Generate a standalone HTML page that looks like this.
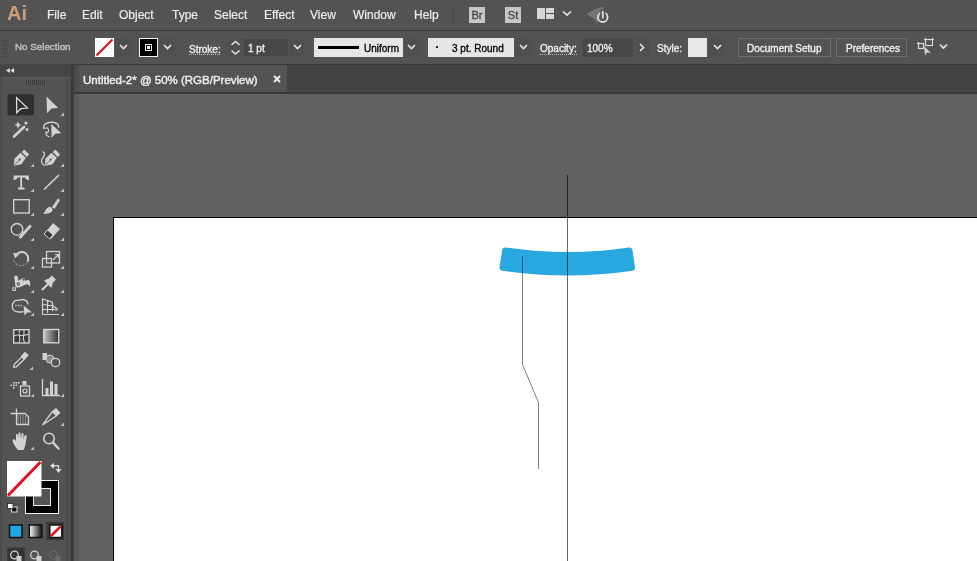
<!DOCTYPE html>
<html><head><meta charset="utf-8">
<style>
*{margin:0;padding:0;box-sizing:border-box}
html,body{width:977px;height:561px;overflow:hidden;background:#535353;font-family:"Liberation Sans",sans-serif}
.abs{position:absolute}
div{will-change:transform}
#menubar{left:0;top:0;width:977px;height:30px;background:#535353}
#mline{left:0;top:30px;width:977px;height:1px;background:#383838}
#ctrl{left:0;top:31px;width:977px;height:33px;background:#535353}
#cline{left:0;top:64px;width:977px;height:1px;background:#393939}
.mi{position:absolute;top:8px;font-size:12px;color:#ececec;line-height:14px;-webkit-text-stroke:0.2px currentColor}
.ct{position:absolute;font-size:10px;color:#eeeeee;line-height:12px;margin-top:1px;-webkit-text-stroke:0.35px currentColor}
.box{position:absolute;background:#474747}
.chev{position:absolute}
#tabbar{left:74px;top:65px;width:903px;height:28px;background:#434343}
#tab{left:79px;top:65px;width:208px;height:28px;background:#535353}
#tabline{left:74px;top:92px;width:903px;height:2px;background:#393939}
#canvas{left:79px;top:94px;width:898px;height:467px;background:#616161}
#strip{left:74px;top:94px;width:5px;height:467px;background:#595959}
#vsep{left:71px;top:64px;width:3px;height:497px;background:#3c3c3c}
#tools{left:0;top:64px;width:71px;height:497px;background:#535353}
#toolhead{left:0;top:64px;width:71px;height:13px;background:#474747}
#artboard{left:113px;top:217px;width:864px;height:344px;background:#fff;border-left:1px solid #000;border-top:1px solid #000}
</style></head><body>
<div id="menubar" class="abs"></div>
<div id="mline" class="abs"></div>
<div class="abs" style="left:0;top:26px;width:977px;height:1px;background:#585858"></div>
<div id="ctrl" class="abs"></div>
<div id="cline" class="abs"></div>

<!-- menu -->
<div class="abs" style="left:7px;top:2px;color:#cc9f7e;font-size:20px;font-weight:bold;line-height:22px;letter-spacing:0px">Ai</div>
<div class="mi" style="left:47px">File</div>
<div class="mi" style="left:82px">Edit</div>
<div class="mi" style="left:119px">Object</div>
<div class="mi" style="left:172px">Type</div>
<div class="mi" style="left:214px">Select</div>
<div class="mi" style="left:264px">Effect</div>
<div class="mi" style="left:310px">View</div>
<div class="mi" style="left:353px">Window</div>
<div class="mi" style="left:414px">Help</div>
<div class="abs" style="left:453px;top:5px;width:1px;height:20px;background:#474747"></div>
<div class="abs" style="left:469px;top:7px;width:16px;height:16px;background:#c6c6c6;color:#444;font-size:11px;line-height:17px;text-align:center;-webkit-text-stroke:0.3px #444">Br</div>
<div class="abs" style="left:505px;top:7px;width:16px;height:16px;background:#c6c6c6;color:#444;font-size:11px;line-height:17px;text-align:center;-webkit-text-stroke:0.3px #444">St</div>
<div class="abs" style="left:537px;top:8px;width:8px;height:11px;background:#d6d6d6"></div>
<div class="abs" style="left:546px;top:8px;width:8px;height:5px;background:#d6d6d6"></div>
<div class="abs" style="left:546px;top:14px;width:8px;height:5px;background:#d6d6d6"></div>
<svg class="abs" style="left:562px;top:10px" width="10" height="7"><path d="M1 1.5L5 5.2L9 1.5" stroke="#e8e8e8" stroke-width="1.6" fill="none"/></svg>
<svg class="abs" style="left:582px;top:0px" width="28" height="28">
<path d="M4.5 14 C8 12 12 9 15 8.5 C17 8 19 7 21.5 6.5 L21 12 C19 14 17 17 16 23 C14.5 22.5 13 21 12 18.5 C9 17 6.5 15.5 4.5 14Z" fill="#808080" opacity="0.75"/>
<circle cx="20.8" cy="17.2" r="4.8" stroke="#e0e0e0" stroke-width="1.8" fill="none"/>
<rect x="18.3" y="10" width="5" height="6.5" fill="#535353"/>
<line x1="20.8" y1="11" x2="20.8" y2="18.5" stroke="#e0e0e0" stroke-width="1.8"/>
</svg>



<!-- control bar -->
<div class="abs" style="left:1px;top:40px;width:7px;height:17px;background:repeating-linear-gradient(#484848 0 1px,transparent 1px 2px)"></div>
<div class="ct" style="left:15px;top:40px;font-size:9.8px;color:#c4c4c4">No Selection</div>
<div class="abs" style="left:95px;top:38px;width:19px;height:19px;background:#fff"></div>
<svg class="abs" style="left:95px;top:38px" width="19" height="19"><line x1="1.5" y1="17.5" x2="17.5" y2="1.5" stroke="#d3121c" stroke-width="2.2"/></svg>
<div class="box" style="left:116px;top:38px;width:15px;height:19px;background:#4f4f4f"></div>
<svg class="abs" style="left:119px;top:44px" width="9" height="6"><path d="M1 1L4.5 4.5L8 1" stroke="#e8e8e8" stroke-width="1.6" fill="none"/></svg>
<div class="abs" style="left:139px;top:38px;width:19px;height:19px;background:#000;border:1px solid #f0f0f0"></div>
<div class="abs" style="left:145px;top:44px;width:7px;height:7px;border:1px solid #f0f0f0"></div>
<div class="abs" style="left:147px;top:46px;width:3px;height:3px;background:#f0f0f0"></div>
<div class="box" style="left:160px;top:38px;width:16px;height:19px;background:#4f4f4f"></div>
<svg class="abs" style="left:163px;top:44px" width="9" height="6"><path d="M1 1L4.5 4.5L8 1" stroke="#e8e8e8" stroke-width="1.6" fill="none"/></svg>
<div class="ct" style="left:189px;top:43px">Stroke:</div>
<div class="abs" style="left:189px;top:54px;width:32px;height:1px;background:repeating-linear-gradient(90deg,#bdbdbd 0 1px,transparent 1px 2px)"></div>
<div class="box" style="left:228px;top:39px;width:15px;height:17px;background:#4f4f4f"></div>
<svg class="abs" style="left:230px;top:40px" width="11" height="16"><path d="M1.5 5L5.5 1.5L9.5 5M1.5 10.5L5.5 14L9.5 10.5" stroke="#e8e8e8" stroke-width="1.4" fill="none"/></svg>
<div class="box" style="left:244px;top:39px;width:44px;height:17px;background:#474747"></div>
<div class="ct" style="left:248px;top:42px">1 pt</div>
<div class="box" style="left:289px;top:39px;width:15px;height:17px;background:#4f4f4f"></div>
<svg class="abs" style="left:293px;top:44px" width="9" height="6"><path d="M1 1L4.5 4.5L8 1" stroke="#e8e8e8" stroke-width="1.6" fill="none"/></svg>

<div class="abs" style="left:314px;top:38px;width:89px;height:19px;background:#e6e6e6"></div>
<div class="abs" style="left:318px;top:46px;width:41px;height:3px;background:#000"></div>
<div class="ct" style="left:364px;top:42px;color:#080808">Uniform</div>
<div class="box" style="left:404px;top:38px;width:15px;height:19px;background:#4f4f4f"></div>
<svg class="abs" style="left:407px;top:44px" width="9" height="6"><path d="M1 1L4.5 4.5L8 1" stroke="#e8e8e8" stroke-width="1.6" fill="none"/></svg>

<div class="abs" style="left:428px;top:38px;width:86px;height:19px;background:#e6e6e6"></div>
<div class="abs" style="left:436px;top:46px;width:2px;height:2px;background:#222"></div>
<div class="ct" style="left:452px;top:42px;color:#080808">3 pt. Round</div>
<div class="box" style="left:516px;top:38px;width:15px;height:19px;background:#4f4f4f"></div>
<svg class="abs" style="left:519px;top:44px" width="9" height="6"><path d="M1 1L4.5 4.5L8 1" stroke="#e8e8e8" stroke-width="1.6" fill="none"/></svg>

<div class="ct" style="left:540px;top:42px">Opacity:</div>
<div class="abs" style="left:540px;top:54px;width:37px;height:1px;background:repeating-linear-gradient(90deg,#bdbdbd 0 1px,transparent 1px 2px)"></div>
<div class="box" style="left:583px;top:38px;width:50px;height:19px;background:#474747"></div>
<div class="ct" style="left:587px;top:42px">100%</div>
<div class="box" style="left:636px;top:38px;width:14px;height:19px;background:#4f4f4f"></div>
<svg class="abs" style="left:639px;top:43px" width="6" height="9"><path d="M1 1L4.5 4.5L1 8" stroke="#e8e8e8" stroke-width="1.6" fill="none"/></svg>

<div class="ct" style="left:657px;top:42px">Style:</div>
<div class="abs" style="left:688px;top:38px;width:19px;height:19px;background:#e8e8e8"></div>
<div class="box" style="left:709px;top:38px;width:16px;height:19px;background:#4f4f4f"></div>
<svg class="abs" style="left:713px;top:44px" width="9" height="6"><path d="M1 1L4.5 4.5L8 1" stroke="#e8e8e8" stroke-width="1.6" fill="none"/></svg>

<div class="abs" style="left:738px;top:38px;width:93px;height:19px;border:1px solid #6e6e6e;background:#535353"></div>
<div class="ct" style="left:747px;top:42px">Document Setup</div>
<div class="abs" style="left:836px;top:38px;width:71px;height:19px;border:1px solid #6e6e6e;background:#535353"></div>
<div class="ct" style="left:846px;top:42px">Preferences</div>


<svg class="abs" style="left:914px;top:36px" width="36" height="22">
<g stroke="#d8d8d8" stroke-width="1.2" fill="none">
<rect x="4.5" y="7.5" width="5" height="5"/>
<rect x="11.5" y="3.5" width="7" height="6"/>
<path d="M3 7.5h1.5M4.5 6v1.5M10 3.5h1.5M11.5 2v1.5M18.5 2v1.5M18.5 3.5h1.5"/>
</g>
<path d="M10 10 L11 19.5 L13 16.5 L17 17 Z" fill="#cfcfcf"/>
<path d="M26 8.5L29.5 12L33 8.5" stroke="#e8e8e8" stroke-width="1.6" fill="none"/>
</svg>

<div id="tabbar" class="abs"></div>
<div id="tab" class="abs"></div>
<div class="abs" style="left:74px;top:65px;width:5px;height:28px;background:#4b4b4b"></div>
<div id="tabline" class="abs"></div>
<div class="abs" style="left:287px;top:90px;width:690px;height:1px;background:#4a4a4a"></div>
<div id="strip" class="abs"></div>
<div id="canvas" class="abs"></div>
<div id="artboard" class="abs"></div>
<svg class="abs" style="left:0;top:0" width="977" height="561">
<path d="M505.16 250.46 A428 428 0 0 0 629.44 250.46 L632.10 267.76 A445.5 445.5 0 0 1 502.50 267.76 Z" fill="#29a7df" stroke="#29a7df" stroke-width="6" stroke-linejoin="round"/>
<path d="M522.5 256V364.5L538.5 402.5V469" stroke="#000" stroke-opacity="0.5" stroke-width="1" fill="none"/>
<line x1="567.5" y1="175" x2="567.5" y2="561" stroke="#000" stroke-opacity="0.6" stroke-width="1"/>
</svg>
<div id="tools" class="abs"></div>
<div id="toolhead" class="abs"></div>
<!--TB--><svg class="abs" style="left:0;top:0" width="72" height="561"><rect x="0" y="77" width="71" height="484" fill="#535353"/><rect x="0" y="64" width="71" height="13" fill="#454545"/><rect x="0" y="77" width="71" height="1" fill="#5c5c5c"/><rect x="0.5" y="64" width="1" height="497" fill="#474747"/><rect x="65" y="78" width="6" height="483" fill="#4f4f4f"/><path d="M6 70.5L9.8 68V73ZM10.3 70.5L14.1 68V73Z" fill="#e0e0e0"/><rect x="26" y="80" width="1" height="5" fill="#3c3c3c"/><rect x="28" y="80" width="1" height="5" fill="#3c3c3c"/><rect x="30" y="80" width="1" height="5" fill="#3c3c3c"/><rect x="32" y="80" width="1" height="5" fill="#3c3c3c"/><rect x="34" y="80" width="1" height="5" fill="#3c3c3c"/><rect x="36" y="80" width="1" height="5" fill="#3c3c3c"/><rect x="38" y="80" width="1" height="5" fill="#3c3c3c"/><rect x="40" y="80" width="1" height="5" fill="#3c3c3c"/><rect x="42" y="80" width="1" height="5" fill="#3c3c3c"/><rect x="44" y="80" width="1" height="5" fill="#3c3c3c"/><rect x="7.5" y="94.3" width="26.5" height="21" rx="1.5" fill="#2f2f2f"/><path d="M16.6 97.6L27.4 108.1L20.9 108.7L16.7 112.8Z" stroke="#dadada" stroke-width="1.3" fill="none" stroke-linejoin="miter"/><path d="M46.5 96.5L58.2 108L51.5 108.6L47 113.2Z" fill="#d2d2d2"/><path d="M60.5 116H64V112.5Z" fill="#c0c0c0"/><line x1="14" y1="136.5" x2="24" y2="127" stroke="#d2d2d2" stroke-width="2.6" stroke-linecap="round"/><path d="M18 121.3L19.1 123.9L21.7 125L19.1 126.1L18 128.7L16.9 126.1L14.3 125L16.9 123.9Z" fill="#d2d2d2"/><circle cx="26" cy="123" r="1.6" fill="#d2d2d2"/><circle cx="27" cy="129.5" r="1.5" fill="#d2d2d2"/><path d="M44 129 C42.5 124.5 46.5 122.3 51 122.3 C55.5 122.3 59 123.5 58.8 127.5" stroke="#d2d2d2" stroke-width="1.4" fill="none"/><path d="M45 128.5 C47 127 49 128.5 48.5 131 C48 133 46 133 45.5 131.5 M46 132.5 C45.5 134.5 47 136 49.5 137" stroke="#d2d2d2" stroke-width="1.2" fill="none"/><path d="M51.3 124L61.3 133.3L55.3 133.8L51.5 138Z" fill="#d2d2d2"/><g transform="translate(0 0)"><path d="M13.6 165.8L14.6 158.5L20.5 152.8L25.8 157.8L21.5 164.2Z" fill="#d2d2d2"/><path d="M21.8 152L24.3 149.6L29.2 154.6L26.7 157Z" fill="#d2d2d2"/><circle cx="19.6" cy="159.6" r="1.1" fill="#535353"/><line x1="14.2" y1="165.2" x2="19.2" y2="160" stroke="#535353" stroke-width="0.8"/></g><path d="M30.5 167H34V163.5Z" fill="#c0c0c0"/><g transform="translate(31 0)"><path d="M13.6 165.8L14.6 158.5L20.5 152.8L25.8 157.8L21.5 164.2Z" fill="#d2d2d2"/><path d="M21.8 152L24.3 149.6L29.2 154.6L26.7 157Z" fill="#d2d2d2"/><circle cx="19.6" cy="159.6" r="1.1" fill="#535353"/><line x1="14.2" y1="165.2" x2="19.2" y2="160" stroke="#535353" stroke-width="0.8"/></g><path d="M44.5 165.8 C40.5 163 41 160 43 157.5 C45 155 45 151.5 42.5 151.8" stroke="#d2d2d2" stroke-width="1.3" fill="none"/><path d="M60.5 167H64V163.5Z" fill="#c0c0c0"/><path d="M14.5 180V176.5H28V180M16.2 176.5V179M26.3 176.5V179M21.2 176.5V188.5M18 188.5H24.5" stroke="#d2d2d2" stroke-width="1.8" fill="none"/><path d="M30.5 192H34V188.5Z" fill="#c0c0c0"/><line x1="44.5" y1="189" x2="58.5" y2="175.5" stroke="#d2d2d2" stroke-width="1.7" stroke-linecap="round"/><path d="M60.5 192H64V188.5Z" fill="#c0c0c0"/><rect x="13.7" y="199.7" width="15.5" height="13.3" stroke="#d2d2d2" stroke-width="1.4" fill="none"/><path d="M30.5 216H34V212.5Z" fill="#c0c0c0"/><path d="M52 207 L58 198.5 L60 200 L54.5 209Z" fill="#d2d2d2"/><path d="M43 214 C45 213 45 209 48 207.5 C51 206 53 208.5 52.5 210.5 C51.5 213 47 214 43 214Z" fill="#d2d2d2"/><path d="M60.5 216H64V212.5Z" fill="#c0c0c0"/><circle cx="17" cy="229.3" r="5.8" stroke="#d2d2d2" stroke-width="1.3" fill="none"/><path d="M18.5 237 L29.8 224.5 L31.8 226.5 L20.5 239 Z" fill="#d2d2d2"/><path d="M30.5 241H34V237.5Z" fill="#c0c0c0"/><path d="M44 234 L53 223 L60 229 L51 239 Z" fill="#d2d2d2"/><path d="M44 234 L47.5 230 L53 235 L49.5 238.8Z" fill="#3a3a3a" stroke="#d2d2d2" stroke-width="1"/><path d="M60.5 241H64V237.5Z" fill="#c0c0c0"/><path d="M16.5 254.5 C19 251.5 24 251 26.5 254 C28.5 256.5 28.5 259.5 27.5 262" stroke="#d2d2d2" stroke-width="1.9" fill="none"/><path d="M27 263 C25 266 20 266.5 16.5 264.5 C14.5 263 13.5 261 13.5 259" stroke="#9a9a9a" stroke-width="1.2" fill="none" stroke-dasharray="2 1.5"/><path d="M13.2 252.5 L19 254.5 L15 258.5 Z" fill="#d2d2d2"/><path d="M30.5 269H34V265.5Z" fill="#c0c0c0"/><rect x="46.5" y="251.5" width="13" height="11.5" stroke="#d2d2d2" stroke-width="1.3" fill="none"/><rect x="42.5" y="258.5" width="9" height="8.5" stroke="#d2d2d2" stroke-width="1.3" fill="none"/><path d="M53 260L58 255M55 254.5h3.5v3.5" stroke="#d2d2d2" stroke-width="1.2" fill="none"/><path d="M60.5 269H64V265.5Z" fill="#c0c0c0"/><path d="M14.2 277 C14.5 275 17 275 17.8 277 L18.5 281 C20 279.5 23 277.5 24 278 C25 278.8 25 280.5 25.5 281 C27 279.5 29.5 279.5 30 282 C30.5 284 30.3 286 29.5 286.5 C28.5 285 27.5 284 26 284.5 C23 285.5 21 287 18 287.5 C15.5 287.8 15 286 15.2 284 Z" fill="#d2d2d2"/><circle cx="18.3" cy="284" r="1.7" fill="#535353"/><circle cx="18.3" cy="284" r="0.8" fill="#d2d2d2"/><circle cx="23.5" cy="279.6" r="1.1" fill="#535353"/><rect x="12.8" y="287.8" width="2.6" height="2.6" stroke="#d2d2d2" stroke-width="1" fill="#535353"/><path d="M30.5 293H34V289.5Z" fill="#c0c0c0"/><path d="M44 280.5 L49 278.5 L51.8 275.5 L56 279.8 L53 282.5 L51.3 288 Z" fill="#d2d2d2"/><path d="M42.5 289.5 L47.5 284.5" stroke="#d2d2d2" stroke-width="2" stroke-linecap="round"/><path d="M60.5 293H64V289.5Z" fill="#c0c0c0"/><path d="M23.5 311.5 C19 312.5 13 312.5 12.3 307 C11.8 302 15.5 299.5 19.5 300.3 C23 298.5 28 300 28 304.5" stroke="#d2d2d2" stroke-width="1.3" fill="none"/><path d="M15.3 305.5h1.3M17.8 305.5h1.3M20.3 305.5h1.3" stroke="#d2d2d2" stroke-width="1.3"/><path d="M23.5 305.5L31.8 312.2L27.3 312.5L24.5 315.5Z" fill="#d2d2d2"/><path d="M30.5 316H34V312.5Z" fill="#c0c0c0"/><path d="M42.5 298.8V314.5H59M42.5 298.8L52.5 302.3V311M42.5 304.5L52.5 305.5M42.5 309.5L52.5 309.5M47.5 300.5V313M52.5 305.5L58 309.5M52.5 309L57 310.5" stroke="#d2d2d2" stroke-width="1.2" fill="none"/><path d="M60.5 316H64V312.5Z" fill="#c0c0c0"/><rect x="13.7" y="329.7" width="15.3" height="13.3" stroke="#d2d2d2" stroke-width="1.4" fill="#3a3a3a"/><path d="M14 336 C18 333 21 338 28.5 334M20 330 C17 334 22 338 19 342.5M24 330 C25 335 21 338 25 343" stroke="#d2d2d2" stroke-width="1.1" fill="none"/><defs><linearGradient id="g1" x1="0" x2="1"><stop offset="0" stop-color="#c4c4c4"/><stop offset="1" stop-color="#333"/></linearGradient><linearGradient id="g2" x1="0" x2="1"><stop offset="0" stop-color="#ffffff"/><stop offset="1" stop-color="#111"/></linearGradient></defs><rect x="43.7" y="329.5" width="15" height="13.3" stroke="#d2d2d2" stroke-width="1.4" fill="url(#g1)"/><path d="M13.6 367.3 L14.2 364.5 L21.8 356.8 L24.2 359.2 L16.5 366.8 Z" stroke="#d2d2d2" stroke-width="1.3" fill="none"/><path d="M20.8 356.2 L25 351.8 L28.8 355.3 L24.6 359.8Z" fill="#d2d2d2"/><path d="M29.5 370H33V366.5Z" fill="#c0c0c0"/><rect x="42.5" y="353" width="4.5" height="7" fill="#d2d2d2"/><circle cx="50" cy="359" r="4" fill="#8a8a8a" stroke="#d2d2d2" stroke-width="1"/><circle cx="55.5" cy="362.5" r="4.2" fill="#535353" stroke="#d2d2d2" stroke-width="1.3"/><rect x="13" y="382" width="1.6" height="1.6" fill="#d2d2d2"/><rect x="15.5" y="382" width="1.6" height="1.6" fill="#d2d2d2"/><rect x="18" y="382" width="1.6" height="1.6" fill="#d2d2d2"/><rect x="13" y="384.5" width="1.6" height="1.6" fill="#d2d2d2"/><rect x="15.5" y="384.5" width="1.6" height="1.6" fill="#d2d2d2"/><rect x="13" y="387" width="1.6" height="1.6" fill="#d2d2d2"/><rect x="10.5" y="384.5" width="1.6" height="1.6" fill="#d2d2d2"/><rect x="20.5" y="386" width="9" height="10" stroke="#d2d2d2" stroke-width="1.3" fill="none"/><circle cx="25" cy="391" r="2" stroke="#d2d2d2" stroke-width="1.2" fill="none"/><rect x="22.5" y="381" width="4" height="4" fill="#d2d2d2"/><path d="M30.5 397H34V393.5Z" fill="#c0c0c0"/><path d="M42.5 379V395.5H60" stroke="#d2d2d2" stroke-width="1.3" fill="none"/><rect x="45.5" y="388" width="3" height="7" fill="#d2d2d2"/><rect x="50" y="381.5" width="3" height="13.5" fill="#d2d2d2"/><rect x="54.5" y="384" width="3" height="11" fill="#d2d2d2"/><path d="M60.5 397H64V393.5Z" fill="#c0c0c0"/><path d="M18 414.5v10M20.5 414.5v10M23 414.5v10M25.5 416v8.5" stroke="#8c8c8c" stroke-width="1"/><path d="M16.5 408.5V424.5H28.5V417L25 413.5H16.5M10.5 413.5H16.5" stroke="#d2d2d2" stroke-width="1.3" fill="none"/><path d="M42.5 425 L52 412 L56 409 L59.5 413 L56 416 Z" stroke="#d2d2d2" stroke-width="1.3" fill="none"/><path d="M52 412L56 409L59.5 413L56 416Z" fill="#d2d2d2"/><path d="M60.5 426H64V422.5Z" fill="#c0c0c0"/><path d="M18 450 C15 447 13 443 12.5 440 C13 438.5 15 439 16 441 L16 435 C16 433.5 18 433.5 18 435 L18 439 L18.5 433.5 C18.5 432 20.5 432 20.5 433.5 L21 439 L21.5 434 C21.5 432.5 23.5 432.5 23.5 434 L23.5 439.5 L24.5 436 C25 434.5 27 435 26.7 436.5 L25.5 444 C25 447 24 449 23.5 450Z" fill="#d2d2d2"/><path d="M30.5 450H34V446.5Z" fill="#c0c0c0"/><circle cx="49" cy="438.5" r="5.3" stroke="#d2d2d2" stroke-width="1.6" fill="none"/><line x1="53" y1="442.5" x2="58.5" y2="448.5" stroke="#d2d2d2" stroke-width="2.4" stroke-linecap="round"/><rect x="25" y="480" width="34" height="34" fill="#f0f0f0"/><rect x="26" y="481" width="32" height="32" fill="#000"/><rect x="33" y="488" width="18" height="18" fill="#f0f0f0"/><rect x="34" y="489" width="16" height="16" fill="#535353"/><rect x="7" y="461" width="34.5" height="35.5" fill="#ffffff"/><line x1="8" y1="495.5" x2="40.5" y2="462" stroke="#dc1420" stroke-width="3"/><path d="M53 465.8H58.5V469.5" stroke="#d2d2d2" stroke-width="1.4" fill="none"/><path d="M50 465.8L54 462.8V468.8Z M55.5 469L61.5 469L58.5 473Z" fill="#e0e0e0"/><rect x="11.5" y="507" width="5.5" height="5" fill="#111" stroke="#ddd" stroke-width="1"/><rect x="7.5" y="503.5" width="5.5" height="5" fill="#fff" stroke="#222" stroke-width="0.8"/><rect x="9.5" y="525" width="12.5" height="12.5" fill="#23a6e6" stroke="#111" stroke-width="1.5"/><rect x="29.3" y="525" width="12.5" height="12.5" fill="url(#g2)" stroke="#111" stroke-width="1.5"/><rect x="46.5" y="522" width="17.5" height="18" fill="#383838"/><rect x="49.8" y="525" width="12" height="12.5" fill="#fff" stroke="#111" stroke-width="1.5"/><line x1="51" y1="536" x2="60.5" y2="526.5" stroke="#e0121c" stroke-width="2.5"/><rect x="7.3" y="547.5" width="17.5" height="14" fill="#343434"/><circle cx="14.5" cy="555" r="3.8" stroke="#cfcfcf" stroke-width="1.3" fill="none"/><rect x="16.5" y="556" width="5" height="5" fill="#cfcfcf"/><circle cx="34.5" cy="555" r="3.8" stroke="#cfcfcf" stroke-width="1.3" fill="none"/><rect x="36.5" y="556" width="5" height="5" fill="#cfcfcf"/><circle cx="53.5" cy="555" r="3.8" stroke="#6a6a6a" stroke-width="1.3" fill="none"/><rect x="55.5" y="556" width="5" height="5" fill="#6a6a6a"/></svg><!--/TB-->
<div id="vsep" class="abs"></div>

<svg class="abs" style="left:272px;top:74px" width="10" height="10"><path d="M2 2L8 8M8 2L2 8" stroke="#efefef" stroke-width="1.9"/></svg>
<div class="abs" style="left:83px;top:74px;font-size:11.5px;color:#ececec;line-height:12px;-webkit-text-stroke:0.45px #ececec">Untitled-2* @ 50% (RGB/Preview)</div>

</body></html>
